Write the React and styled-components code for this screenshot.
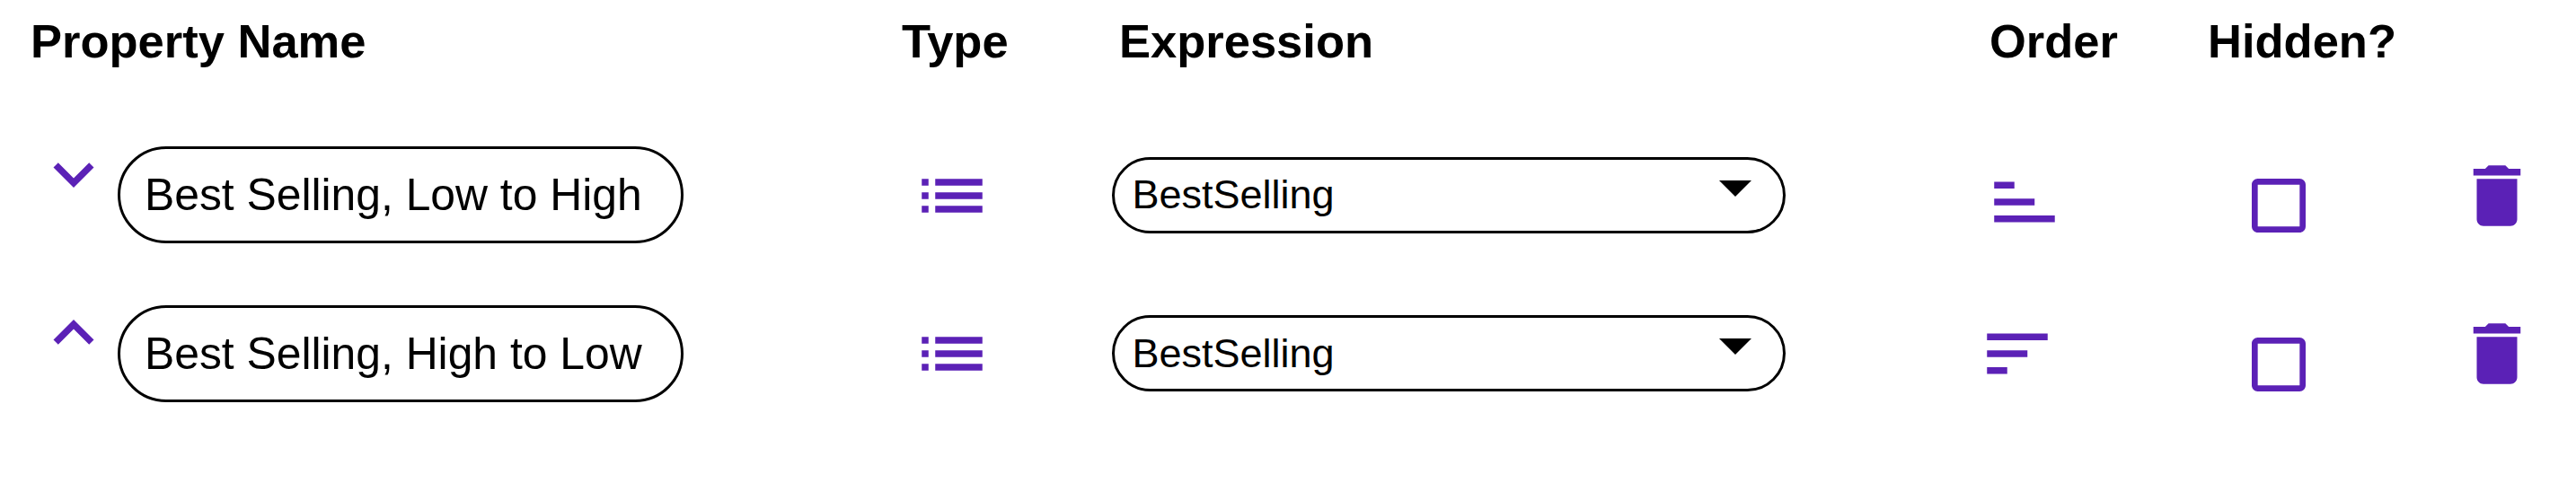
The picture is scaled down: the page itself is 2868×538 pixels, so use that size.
import React from 'react'
import styled, { createGlobalStyle } from 'styled-components'

const PURPLE = '#5b21b6'

const GlobalStyle = createGlobalStyle`
  html, body {
    margin: 0;
    background: #fff;
    font-family: "Liberation Sans", Arial, sans-serif;
    color: #000;
  }
`

const Table = styled.div`
  width: 2868px;
  height: 538px;
  padding-top: 14px;
  box-sizing: border-box;
`

const HeaderRow = styled.div`
  display: grid;
  grid-template-columns: 970px 242px 969px 243px auto;
  padding-left: 34px;
  height: 63px;
  margin-bottom: 86px;
`

const HeaderCell = styled.div`
  font-size: 52.5px;
  line-height: 63px;
  font-weight: 700;
  white-space: nowrap;
`

const Row = styled.div`
  display: flex;
  align-items: center;
  height: 108px;
  padding-left: 36.5px;
  margin-bottom: 68.5px;
`

const IconSlot = styled.div`
  flex: none;
  display: flex;
  width: ${(p) => p.$size || 90}px;
  height: ${(p) => p.$size || 90}px;
  margin-left: ${(p) => p.$left || 0}px;
  margin-top: ${(p) => p.$shift > 0 ? p.$shift * 2 : 0}px;
  margin-bottom: ${(p) => p.$shift < 0 ? -p.$shift * 2 : 0}px;
  color: ${PURPLE};
`

const NameField = styled.div`
  flex: none;
  box-sizing: border-box;
  width: 630px;
  height: 108px;
  margin-left: 4.5px;
  padding-left: 27px;
  display: flex;
  align-items: center;
  border: 3px solid #000;
  border-radius: 54px;
  font-size: 49.8px;
  white-space: nowrap;
`

const ExpressionSelect = styled.div`
  flex: none;
  box-sizing: border-box;
  width: 750px;
  height: 85px;
  margin-left: 133px;
  padding: 0 35px 0 19px;
  display: flex;
  align-items: center;
  justify-content: space-between;
  border: 3px solid #000;
  border-radius: 42.5px;
  font-size: 45px;
`

const Caret = styled.span`
  width: 0;
  height: 0;
  margin-bottom: 15px;
  border-left: 18.5px solid transparent;
  border-right: 18.5px solid transparent;
  border-top: 18px solid #000;
`

const Icon = ({ d, flip }) => (
  <svg width="100%" height="100%" viewBox="0 0 24 24" fill="currentColor">
    <path d={d} transform={flip} />
  </svg>
)

const ICONS = {
  down: 'M16.59 8.59L12 13.17 7.41 8.59 6 10l6 6 6-6z',
  up: 'M12 8l-6 6 1.41 1.41L12 10.83l4.59 4.58L18 14z',
  list: 'M3 13h2v-2H3v2zm0 4h2v-2H3v2zm0-8h2V7H3v2zm4 4h14v-2H7v2zm0 4h14v-2H7v2zM7 7v2h14V7H7z',
  sort: 'M3 18h6v-2H3v2zM3 6v2h18V6H3zm0 7h12v-2H3v2z',
  box: 'M19 5v14H5V5h14m0-2H5c-1.1 0-2 .9-2 2v14c0 1.1.9 2 2 2h14c1.1 0 2-.9 2-2V5c0-1.1-.9-2-2-2z',
  trash: 'M6 19c0 1.1.9 2 2 2h8c1.1 0 2-.9 2-2V7H6v12zM19 4h-3.5l-1-1h-5l-1 1H5v2h14V4z',
}

const rows = [
  {
    name: 'Best Selling, Low to High',
    chevron: ICONS.down,
    sortFlip: 'translate(2.13 26.13) scale(1 -1)',
  },
  {
    name: 'Best Selling, High to Low',
    chevron: ICONS.up,
    sortFlip: undefined,
  },
]

const headers = ['Property Name', 'Type', 'Expression', 'Order', 'Hidden?']

export default function App() {
  return (
    <Table>
      <GlobalStyle />
      <HeaderRow>
        {headers.map((h) => (
          <HeaderCell key={h}>{h}</HeaderCell>
        ))}
      </HeaderRow>
      {rows.map((r) => (
        <Row key={r.name}>
          <IconSlot $shift={-23}>
            <Icon d={r.chevron} />
          </IconSlot>
          <NameField>{r.name}</NameField>
          <IconSlot $left={254.4} $shift={0.75}>
            <Icon d={ICONS.list} />
          </IconSlot>
          <ExpressionSelect>
            BestSelling
            <Caret />
          </ExpressionSelect>
          <IconSlot $left={212.5}>
            <Icon d={ICONS.sort} flip={r.sortFlip} />
          </IconSlot>
          <IconSlot $size={80} $left={206.4} $shift={12}>
            <Icon d={ICONS.box} />
          </IconSlot>
          <IconSlot $left={157.7} $shift={0.75}>
            <Icon d={ICONS.trash} />
          </IconSlot>
        </Row>
      ))}
    </Table>
  )
}
